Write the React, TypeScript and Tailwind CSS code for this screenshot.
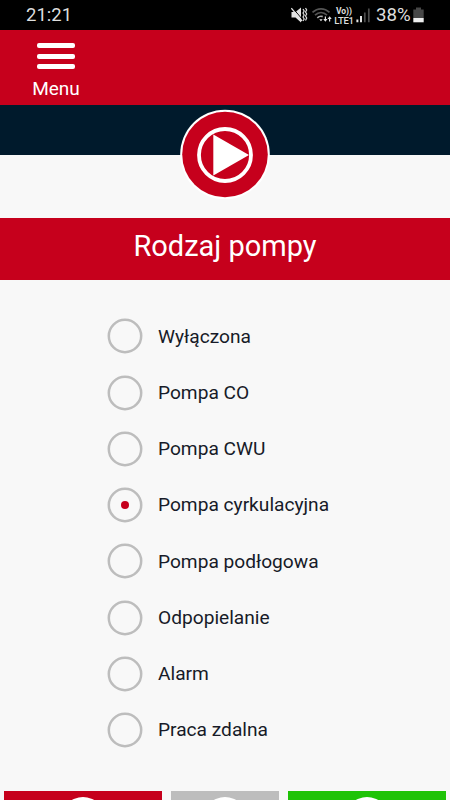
const options = [
  'Wyłączona',
  'Pompa CO',
  'Pompa CWU',
  'Pompa cyrkulacyjna',
  'Pompa podłogowa',
  'Odpopielanie',
  'Alarm',
  'Praca zdalna',
];
const selected = 'Pompa cyrkulacyjna';

function StatusBar() {
  return (
    <div className="flex h-[30px] shrink-0 items-center bg-black text-[#dedede]">
      <span className="ml-[26px] text-[18.5px] leading-[32px]">21:21</span>
      <svg className="ml-auto h-[30px] w-[43px] shrink-0" viewBox="291 0 43 30" fill="none">
        <path d="M291.500 12h4l5.500-4.500v15l-5.500-5h-4z" fill="#e4e4e4" />
        <path d="M292.300 7.500l9.700 11.500" stroke="#000" strokeWidth="1" />
        <path d="M291.300 8.200l10.700 12.800" stroke="#e4e4e4" strokeWidth="1.300" />
        <path d="M303 9l1.200 2-1.200 2 1.200 2-1.200 2 1.200 2-1.200 2M305.500 8l1.200 2-1.200 2 1.200 2-1.200 2 1.200 2-1.200 2.500" stroke="#dcdcdc" strokeWidth="1.200" />
        <path d="M312.500 12.400c5-4.800 12-4.800 17 0M315 15.200c3.600-3.400 8.400-3.400 12 0" stroke="#555" strokeWidth="1.700" />
        <path d="M317.300 17.800c1.800-1.600 3.600-1.900 5.400-1.200" stroke="#aaa" strokeWidth="1.700" />
        <path d="M319.300 19.300h3.400l-1.700 2z" fill="#e4e4e4" />
        <path d="M325.400 16.500v4.500M329.600 17v4.500" stroke="#e4e4e4" strokeWidth="1.200" />
        <path d="M323.300 19h4.200l-2.100 2.800zM327.500 19h4.200l-2.100-2.800z" fill="#e4e4e4" />
      </svg>
      <div className="-ml-px flex w-[22px] shrink-0 flex-col items-center pt-[2px] font-bold">
        <span className="h-[9px] text-[8.500px] leading-[9px]">Vo))</span>
        <span className="h-[9px] text-[9.500px] leading-[9px] font-medium tracking-[-0.300px]">LTE1</span>
      </div>
      <svg className="h-[30px] w-[15px] shrink-0" viewBox="355 0 15 30" fill="none">
        <path d="M357.400 19.500v2.700M361 16v6.200" stroke="#e4e4e4" strokeWidth="2" />
        <path d="M364.800 12.500v9.700M368.800 8.500v13.700" stroke="#4c4c4c" strokeWidth="1.700" />
      </svg>
      <span className="ml-[6px] w-[37px] whitespace-nowrap text-[18.700px] leading-[32px] tracking-[0px]">38%</span>
      <svg className="mr-[25px] h-[30px] w-[12px] shrink-0" viewBox="413 0 12 30">
        <path d="M416 7.500h5v2h2.700v8.500h-10.400V9.500H416z" fill="#474747" />
        <path d="M413.300 18h10.400v4.300h-10.400z" fill="#eee" />
      </svg>
    </div>
  );
}

export default function App() {
  return (
    <div className="flex h-[800px] w-[450px] flex-col overflow-hidden bg-[#f8f8f8] font-['Roboto','Noto_Sans',sans-serif]">
      <StatusBar />
      <header className="flex h-[75px] shrink-0 bg-[#c6001c] pl-[32px] text-white">
        <button className="flex w-[48px] flex-col items-center pt-[13px]">
          <span className="flex flex-col gap-[5.500px]">
            <span className="h-[5px] w-[38px] rounded-[2px] bg-white" />
            <span className="h-[5px] w-[38px] rounded-[2px] bg-white" />
            <span className="h-[5px] w-[38px] rounded-[2px] bg-white" />
          </span>
          <span className="mt-[8px] text-[19px] leading-[24px]">Menu</span>
        </button>
      </header>
      <div className="flex h-[50px] shrink-0 justify-center bg-[#001a2c]">
        <svg className="relative mt-[4px] h-[90px] w-[90px] shrink-0" viewBox="0 0 90 90">
          <circle cx="45" cy="45.500" r="44.800" fill="#fff" />
          <circle cx="45" cy="45.500" r="42.800" fill="#c6001c" />
          <circle cx="45" cy="46" r="26" fill="none" stroke="#fff" strokeWidth="3.800" />
          <path d="M33.300 25.500v41L69 46z" fill="#fff" />
        </svg>
      </div>
      <h1 className="mt-[62.500px] h-[62px] shrink-0 bg-[#c6001c] text-center text-[29px] leading-[57px] text-white">
        Rodzaj pompy
      </h1>
      <main className="flex flex-1 flex-col pt-[28.700px] pl-[107px]">
        {options.map((label) => (
          <label key={label} className="flex h-[56.250px] shrink-0 items-center gap-[15px] text-[19.150px] text-[#171b28]">
            <svg className="h-[36px] w-[36px] shrink-0" viewBox="0 0 36 36">
              <circle cx="18" cy="18" r="16.200" fill="none" stroke="#bdbdbd" strokeWidth="2.500" />
              {label === selected && <circle cx="18" cy="18" r="4" fill="#c6001c" />}
            </svg>
            <span className="pt-[1.200px]">{label}</span>
          </label>
        ))}
      </main>
      <footer className="flex h-[9px] shrink-0 gap-[9px] overflow-hidden px-[4px]">
        <div className="flex w-[158px] justify-center overflow-hidden bg-[#c6001c] pt-[6px]">
          <span className="h-[44px] w-[44px] shrink-0 rounded-full bg-white" />
        </div>
        <div className="flex w-[108px] justify-center overflow-hidden bg-[#bdbdbd] pt-[6px]">
          <span className="h-[44px] w-[44px] shrink-0 rounded-full bg-white" />
        </div>
        <div className="flex w-[158px] justify-center overflow-hidden bg-[#1fc307] pt-[6px]">
          <span className="h-[44px] w-[44px] shrink-0 rounded-full bg-white" />
        </div>
      </footer>
    </div>
  );
}
